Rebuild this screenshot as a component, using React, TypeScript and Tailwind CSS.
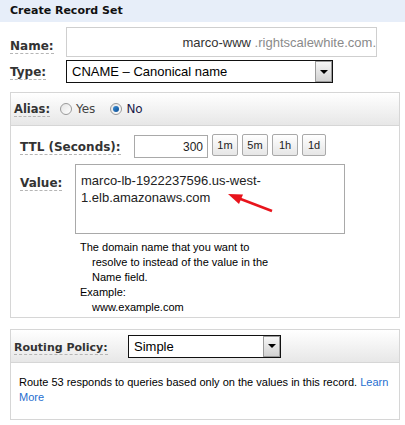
import type { ReactNode } from 'react';

const VERDANA = "font-['DejaVu_Sans',Verdana,sans-serif]";

function Label({ children, size = 'text-[12px]' }: { children: ReactNode; size?: string }) {
  return (
    <span
      className={`${VERDANA} ${size} font-bold text-[#333] leading-[14px] border-b border-dashed border-[#b5b5b5]`}
    >
      {children}
    </span>
  );
}

function Select({ value, className }: { value: string; className: string }) {
  return (
    <div className={`flex h-[23px] border border-[#111] bg-white ${className}`}>
      <span className="flex-1 pl-[5px] text-[13px] leading-[21px] text-black">{value}</span>
      <span className="w-[17px] h-full border border-[#9a9a9a] bg-gradient-to-b from-[#f6f6f6] to-[#d2d2d2] flex items-center justify-center">
        <span className="w-0 h-0 border-l-[4px] border-r-[4px] border-t-[4px] border-l-transparent border-r-transparent border-t-black" />
      </span>
    </div>
  );
}

function Radio({ checked }: { checked?: boolean }) {
  return (
    <span className="w-[12px] h-[12px] rounded-full border border-[#9a9a9a] bg-gradient-to-br from-[#e4e4e4] to-white flex items-center justify-center">
      {checked && <span className="w-[6px] h-[6px] rounded-full bg-gradient-to-br from-[#3b8fd8] to-[#0b4d91]" />}
    </span>
  );
}

function TimeButton({ label, w }: { label: string; w: string }) {
  return (
    <span
      className={`${w} h-[22px] border border-[#a9a9a9] rounded-[2px] bg-gradient-to-b from-white to-[#e6e6e6] flex items-center justify-center text-[11px] text-[#222]`}
    >
      {label}
    </span>
  );
}

export default function App() {
  return (
    <div className="relative w-[405px] h-[425px] bg-white overflow-hidden font-['Liberation_Sans',Arial,sans-serif]">
      {/* title bar */}
      <div className="h-[22px] bg-[#e7eef9] pl-[10px] flex items-center">
        <span className={`${VERDANA} text-[11px] font-bold text-[#111]`}>Create Record Set</span>
      </div>

      {/* name + type */}
      <div className="pl-[10px] pt-[5px]">
        <div className="flex items-end h-[30px]">
          <div className="w-[56px]">
            <Label>Name:</Label>
          </div>
          <div className="w-[311px] h-[30px] border border-[#cfcfcf] flex items-center justify-end text-[13px] pt-[2px]">
            <span className="text-[#333]">marco-www</span>
            <span className="text-[#8a8a8a]">&nbsp;.rightscalewhite.com.</span>
          </div>
        </div>
        <div className="flex items-end mt-[3px] h-[23px]">
          <div className="w-[56px]">
            <Label>Type:</Label>
          </div>
          <Select value="CNAME – Canonical name" className="w-[267px]" />
        </div>
      </div>

      {/* alias panel */}
      <div className="ml-[10px] w-[390px] mt-[9px] border border-[#d6d6d6]">
        <div className="h-[33px] bg-gradient-to-b from-white to-[#e7e7e7] border-b border-[#d6d6d6] flex items-center pl-[3px] text-[12px]">
          <Label size="text-[11.5px]">Alias:</Label>
          <span className="ml-[10px]">
            <Radio />
          </span>
          <span className={`${VERDANA} ml-[4px] text-[#444]`}>Yes</span>
          <span className="ml-[15px]">
            <Radio checked />
          </span>
          <span className={`${VERDANA} ml-[4px] text-[#1c1c4a]`}>No</span>
        </div>

        <div className="pl-[9px] pt-[8px] pb-[2px]">
          <div className="flex items-start">
            <div className="w-[114px]">
              <Label>TTL (Seconds):</Label>
            </div>
            <div className="mt-[1px] w-[74px] h-[23px] border border-[#a9a9a9] flex items-end justify-end pr-[4px] pb-[1px] text-[12px] text-[#222]">
              300
            </div>
            <div className="flex gap-[4px] ml-[4px]">
              <TimeButton label="1m" w="w-[26px]" />
              <TimeButton label="5m" w="w-[26px]" />
              <TimeButton label="1h" w="w-[26px]" />
              <TimeButton label="1d" w="w-[24px]" />
            </div>
          </div>

          <div className="flex items-start mt-[6px]">
            <div className="w-[55px] pt-[6px]">
              <Label>Value:</Label>
            </div>
            <div className="w-[270px] h-[70px] border border-[#a9a9a9] pl-[5px] pt-[7px] text-[13px] leading-[17px] text-[#222]">
              marco-lb-1922237596.us-west-
              <br />
              1.elb.amazonaws.com
            </div>
          </div>

          <div className="ml-[60px] mt-[6px] text-[11px] leading-[15px] text-black">
            <div>The domain name that you want to</div>
            <div className="pl-[12px]">resolve to instead of the value in the</div>
            <div className="pl-[12px]">Name field.</div>
            <div>Example:</div>
            <div className="pl-[12px]">www.example.com</div>
          </div>
        </div>
      </div>

      {/* routing policy panel */}
      <div className="ml-[10px] w-[390px] mt-[11px] border border-[#d6d6d6]">
        <div className="h-[33px] bg-gradient-to-b from-white to-[#e7e7e7] border-b border-[#d6d6d6] flex items-center pl-[3px]">
          <div className="w-[114px]">
            <Label size="text-[11px]">Routing Policy:</Label>
          </div>
          <Select value="Simple" className="w-[153px]" />
        </div>
        <div className="pl-[8px] pr-[6px] pt-[12px] pb-[14px] text-[11px] leading-[15px] text-black">
          Route 53 responds to queries based only on the values in this record.{' '}
          <span className="text-[#1f6fd0]">Learn More</span>
        </div>
      </div>

      {/* annotation arrow */}
      <svg className="absolute left-0 top-0 pointer-events-none" width="405" height="425">
        <line x1="272" y1="211" x2="238" y2="198" stroke="#e8141c" strokeWidth="2.5" />
        <polygon points="228,194 243,194.5 239,204" fill="#e8141c" />
      </svg>
    </div>
  );
}
